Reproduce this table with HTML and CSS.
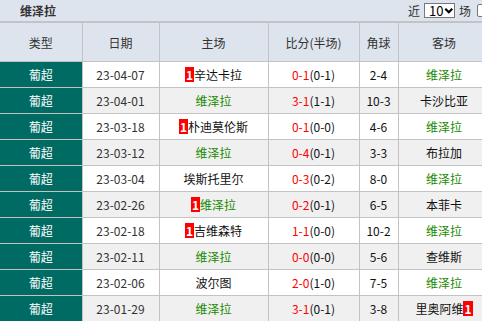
FILE: index.html
```html
<!DOCTYPE html>
<html lang="zh">
<head>
<meta charset="utf-8">
<title>维泽拉</title>
<link rel="stylesheet" href="styles.css">
</head>
<body>
<div class="panel">
  <div class="titlebar">
    <span class="title">维泽拉</span>
    <div class="filter">
      <span>近</span>
      <span class="select">10<svg class="chev" width="11" height="8" viewBox="0 0 11 8"><polyline points="1.5,1.5 5.5,5.5 9.5,1.5" fill="none" stroke="#000" stroke-width="2.4"/></svg></span>
      <span>场</span>
      <span class="check"></span>
    </div>
  </div>
  <table class="matches">
    <colgroup>
      <col class="c-type"><col class="c-date"><col class="c-home"><col class="c-score"><col class="c-corner"><col class="c-away">
    </colgroup>
    <thead>
      <tr><th>类型</th><th>日期</th><th>主场</th><th>比分(半场)</th><th>角球</th><th>客场</th></tr>
    </thead>
    <tbody>
      <tr><td class="league">葡超</td><td class="date">23-04-07</td><td><span class="card">1</span>辛达卡拉</td><td><span class="ft">0-1</span>(0-1)</td><td>2-4</td><td class="team-us">维泽拉</td></tr>
      <tr class="alt"><td class="league">葡超</td><td class="date">23-04-01</td><td class="team-us">维泽拉</td><td><span class="ft">3-1</span>(1-1)</td><td>10-3</td><td>卡沙比亚</td></tr>
      <tr><td class="league">葡超</td><td class="date">23-03-18</td><td><span class="card">1</span>朴迪莫伦斯</td><td><span class="ft">0-1</span>(0-0)</td><td>4-6</td><td class="team-us">维泽拉</td></tr>
      <tr class="alt"><td class="league">葡超</td><td class="date">23-03-12</td><td class="team-us">维泽拉</td><td><span class="ft">0-4</span>(0-1)</td><td>3-3</td><td>布拉加</td></tr>
      <tr><td class="league">葡超</td><td class="date">23-03-04</td><td>埃斯托里尔</td><td><span class="ft">0-3</span>(0-2)</td><td>8-0</td><td class="team-us">维泽拉</td></tr>
      <tr class="alt"><td class="league">葡超</td><td class="date">23-02-26</td><td class="team-us"><span class="card">1</span>维泽拉</td><td><span class="ft">0-2</span>(0-1)</td><td>6-5</td><td>本菲卡</td></tr>
      <tr><td class="league">葡超</td><td class="date">23-02-18</td><td><span class="card">1</span>吉维森特</td><td><span class="ft">1-1</span>(0-0)</td><td>10-2</td><td class="team-us">维泽拉</td></tr>
      <tr class="alt"><td class="league">葡超</td><td class="date">23-02-11</td><td class="team-us">维泽拉</td><td><span class="ft">0-0</span>(0-0)</td><td>5-6</td><td>查维斯</td></tr>
      <tr><td class="league">葡超</td><td class="date">23-02-06</td><td>波尔图</td><td><span class="ft">2-0</span>(1-0)</td><td>7-5</td><td class="team-us">维泽拉</td></tr>
      <tr class="alt"><td class="league">葡超</td><td class="date">23-01-29</td><td class="team-us">维泽拉</td><td><span class="ft">3-1</span>(0-1)</td><td>3-8</td><td>里奥阿维<span class="card">1</span></td></tr>
    </tbody>
  </table>
</div>
</body>
</html>
```
FILE: styles.css
```css
html, body {
  margin: 0;
  padding: 0;
  overflow: hidden;
  background: #fff;
}
.panel {
  width: 490px;
  font-family: "Noto Sans CJK SC", "Liberation Sans", sans-serif;
  font-size: 12px;
  color: #000;
}
.titlebar {
  height: 21px;
  background: #dde4ed;
  border-bottom: 1px solid #c3c3c3;
  display: flex;
  align-items: center;
  justify-content: space-between;
  padding-left: 20px;
  box-sizing: content-box;
}
.title {
  font-weight: bold;
  font-size: 12px;
  color: #333;
  line-height: 21px;
}
.filter {
  display: flex;
  align-items: center;
  gap: 4px;
  color: #333;
  line-height: 14px;
}
.select {
  display: inline-flex;
  align-items: center;
  box-sizing: border-box;
  width: 31px;
  height: 15px;
  border: 1px solid #777;
  background: #fff;
  padding-left: 4px;
  color: #000;
  font-size: 13px;
}
.chev {
  margin-left: 1px;
}
.check {
  display: inline-block;
  width: 13px;
  height: 13px;
  box-sizing: border-box;
  border: 1px solid #777;
  border-radius: 2px;
  background: #fff;
  margin-left: 2px;
}
.matches {
  border-collapse: collapse;
  table-layout: fixed;
  width: 490px;
}
.c-type { width: 82px; }
.c-date { width: 77px; }
.c-home { width: 109px; }
.c-score { width: 91px; }
.c-corner { width: 39px; }
.c-away { width: 92px; }
.matches th,
.matches td {
  border: 1px solid #c3c3c3;
  text-align: center;
  vertical-align: middle;
  padding: 0;
  white-space: nowrap;
}
.matches th:first-child,
.matches td:first-child {
  border-left: none;
}
.matches thead tr {
  border-top: none;
}
.matches th {
  height: 38px;
  background: #dde4ed;
  font-weight: normal;
  color: #333;
  font-size: 12px;
}
.matches td {
  height: 25px;
  color: #111;
}
.matches tr.alt td {
  background: #f0f0f0;
}
.matches td.league,
.matches tr.alt td.league {
  background: #006b63;
  color: #fff;
}
.matches td.date {
  color: #333;
}
.matches td.team-us {
  color: #1a8a00;
}
.ft {
  color: #f00;
}
.card {
  display: inline-block;
  background: #f00;
  color: #fff;
  font-weight: bold;
  line-height: 15px;
  padding: 0 1px;
  vertical-align: 0;
}
```
